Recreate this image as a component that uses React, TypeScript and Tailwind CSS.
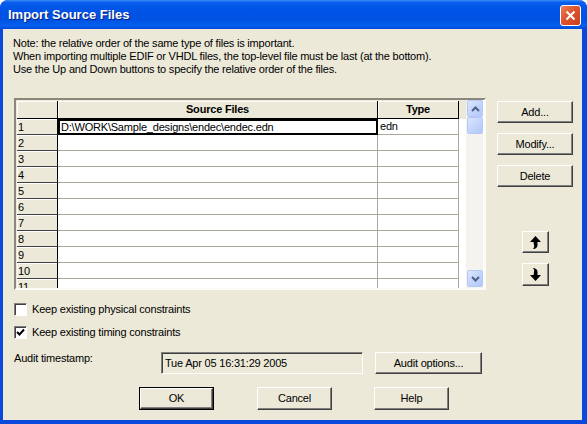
import React from "react";

const btn =
  "flex items-center justify-center bg-[#ECE9D8] border border-t-white border-l-white border-b-[#404040] border-r-[#404040] shadow-[inset_-1px_-1px_0_#808080] text-[11px] text-black";

function Btn({ label, className }: { label: React.ReactNode; className: string }) {
  return <div className={`${btn} ${className}`}>{label}</div>;
}

function UpArrow({ flip }: { flip?: boolean }) {
  return (
    <svg width="11" height="13" viewBox="0 0 11 13" className={flip ? "-scale-y-100" : ""}>
      <path d="M5.5 0 L11 6 L7.5 6 L7.5 9 Q7.5 12 4 13 L3 13 Q5 11 4 9 L3.5 6 L0 6 Z" fill="#000" />
    </svg>
  );
}

function ScrollBtn({ dir }: { dir: "up" | "down" | "none" }) {
  return (
    <div className="w-[16px] h-[17px] ml-[1px] rounded-[2px] border border-[#B4C8F5] bg-[linear-gradient(135deg,#DCE7FE_0%,#C4D5FB_50%,#B3C8F8_100%)] flex items-center justify-center">
      {dir !== "none" && (
        <svg width="9" height="6" viewBox="0 0 9 6">
          <path
            d={dir === "up" ? "M1 5 L4.5 1.5 L8 5" : "M1 1 L4.5 4.5 L8 1"}
            stroke="#4D6185"
            strokeWidth="2"
            fill="none"
          />
        </svg>
      )}
    </div>
  );
}

export default function App() {
  const rows = Array.from({ length: 11 }, (_, i) => i + 1);
  return (
    <div className="w-[587px] h-[424px] bg-white overflow-hidden font-['Liberation_Sans',Arial,sans-serif] text-black">
      <div className="w-full h-full flex flex-col rounded-t-[8px] bg-[#0B48DC] overflow-hidden">
        {/* Title bar */}
        <div className="h-[29px] shrink-0 flex items-center justify-between pl-[8px] pr-[6px] bg-[linear-gradient(180deg,#3C8CF7_0%,#0A5FEE_8%,#0054E6_30%,#0052E2_70%,#0560F0_88%,#0049D8_100%)]">
          <span className="text-white font-bold text-[13px] [text-shadow:1px_1px_0_#0A1E7A]">
            Import Source Files
          </span>
          <div className="w-[21px] h-[21px] mt-[1px] rounded-[3px] border border-white bg-[linear-gradient(135deg,#E9805F_0%,#E0532D_45%,#C8401A_100%)] flex items-center justify-center">
            <svg width="11" height="11" viewBox="0 0 11 11">
              <path d="M1.5 1.5 L9.5 9.5 M9.5 1.5 L1.5 9.5" stroke="#fff" strokeWidth="2" />
            </svg>
          </div>
        </div>

        {/* Client */}
        <div className="flex-1 ml-[3px] mr-[5px] mb-[4px] bg-[#ECE9D8] flex flex-col text-[11px] tracking-[-0.2px]">
          <div className="pl-[10px] pt-[8px] leading-[13px]">
            <div>Note: the relative order of the same type of files is important.</div>
            <div>When importing multiple EDIF or VHDL files, the top-level file must be last (at the bottom).</div>
            <div>Use the Up and Down buttons to specify the relative order of the files.</div>
          </div>

          <div className="flex mt-[22px] ml-[11px]">
            {/* Table frame */}
            <div className="w-[472px] h-[192px] border-2 border-t-[#8A877B] border-l-[#8A877B] border-b-[#FBFBF8] border-r-[#FBFBF8] flex">
              <div className="w-[450px] h-full bg-[#ECE9D8] pt-[1px] pl-[1px] flex flex-col overflow-hidden">
                {/* header */}
                <div className="flex h-[18px] shrink-0 font-bold">
                  <div className="w-[41px] h-full border-r border-b border-black shadow-[inset_1px_1px_0_#fff]" />
                  <div className="w-[320px] h-full border-r border-b border-black shadow-[inset_1px_1px_0_#fff] flex items-center justify-center">
                    Source Files
                  </div>
                  <div className="w-[81px] h-full border-r border-b border-black shadow-[inset_1px_1px_0_#fff] flex items-center justify-center">
                    Type
                  </div>
                  <div className="flex-1" />
                </div>
                {rows.map((n) => (
                  <div key={n} className="flex h-[16px] shrink-0 bg-white">
                    <div className="w-[41px] h-full bg-[#ECE9D8] border-r border-b border-r-black border-b-[#404040] shadow-[inset_1px_1px_0_#fff] pl-[1px] leading-[16px]">
                      {n}
                    </div>
                    {n === 1 ? (
                      <div className="w-[320px] h-full border-2 border-black pl-[1px] leading-[12px] overflow-hidden whitespace-nowrap">
                        D:\WORK\Sample_designs\endec\endec.edn
                      </div>
                    ) : (
                      <div className="w-[320px] h-full border-r border-b border-[#ACA899]" />
                    )}
                    <div className="w-[81px] h-full border-r border-b border-[#ACA899] pl-[2px] leading-[15px]">
                      {n === 1 ? "edn" : ""}
                    </div>
                    <div className="flex-1" />
                  </div>
                ))}
              </div>
              {/* scrollbar */}
              <div className="w-[17px] h-full bg-[#F4F3EE] flex flex-col pb-[1px]">
                <ScrollBtn dir="up" />
                <ScrollBtn dir="none" />
                <div className="flex-1" />
                <ScrollBtn dir="down" />
              </div>
              <div className="w-[1px] h-full bg-white" />
            </div>

            {/* right buttons */}
            <div className="ml-[11px] pt-[3px] flex flex-col">
              <Btn label="Add..." className="w-[76px] h-[22px]" />
              <Btn label="Modify..." className="w-[76px] h-[22px] mt-[10px]" />
              <Btn label="Delete" className="w-[76px] h-[22px] mt-[10px]" />
              <Btn label={<UpArrow />} className="w-[27px] h-[22px] mt-[44px] ml-[25px]" />
              <Btn label={<UpArrow flip />} className="w-[27px] h-[23px] mt-[10px] ml-[25px]" />
            </div>
          </div>

          {/* checkboxes */}
          <div className="flex items-center ml-[11px] mt-[13px] h-[13px]">
            <div className="w-[13px] h-[13px] bg-white border border-t-[#808080] border-l-[#808080] border-b-white border-r-white shadow-[inset_1px_1px_0_#404040]" />
            <span className="ml-[5px]">Keep existing physical constraints</span>
          </div>
          <div className="flex items-center ml-[11px] mt-[10px] h-[13px]">
            <div className="w-[13px] h-[13px] bg-white border border-t-[#808080] border-l-[#808080] border-b-white border-r-white shadow-[inset_1px_1px_0_#404040] flex items-center justify-center">
              <svg width="9" height="9" viewBox="0 0 9 9">
                <path d="M1 4 L3.5 6.5 L8 1.5" stroke="#000" strokeWidth="2" fill="none" />
              </svg>
            </div>
            <span className="ml-[5px]">Keep existing timing constraints</span>
          </div>

          {/* audit row */}
          <div className="flex items-start ml-[11px] mt-[13px]">
            <div className="w-[147px] leading-[13px]">Audit timestamp:</div>
            <div className="w-[202px] h-[22px] border border-t-[#808080] border-l-[#808080] border-b-white border-r-white shadow-[inset_1px_1px_0_#404040] flex items-center pl-[3px] bg-[#ECE9D8]">
              Tue Apr 05 16:31:29 2005
            </div>
            <Btn label="Audit options..." className="w-[107px] h-[22px] ml-[12px]" />
          </div>

          {/* bottom buttons */}
          <div className="flex ml-[136px] mt-[13px]">
            <div className="w-[75px] h-[23px] border border-black flex">
              <Btn label="OK" className="flex-1 h-full" />
            </div>
            <Btn label="Cancel" className="w-[75px] h-[23px] ml-[43px]" />
            <Btn label="Help" className="w-[75px] h-[23px] ml-[42px]" />
          </div>
        </div>
      </div>
    </div>
  );
}
